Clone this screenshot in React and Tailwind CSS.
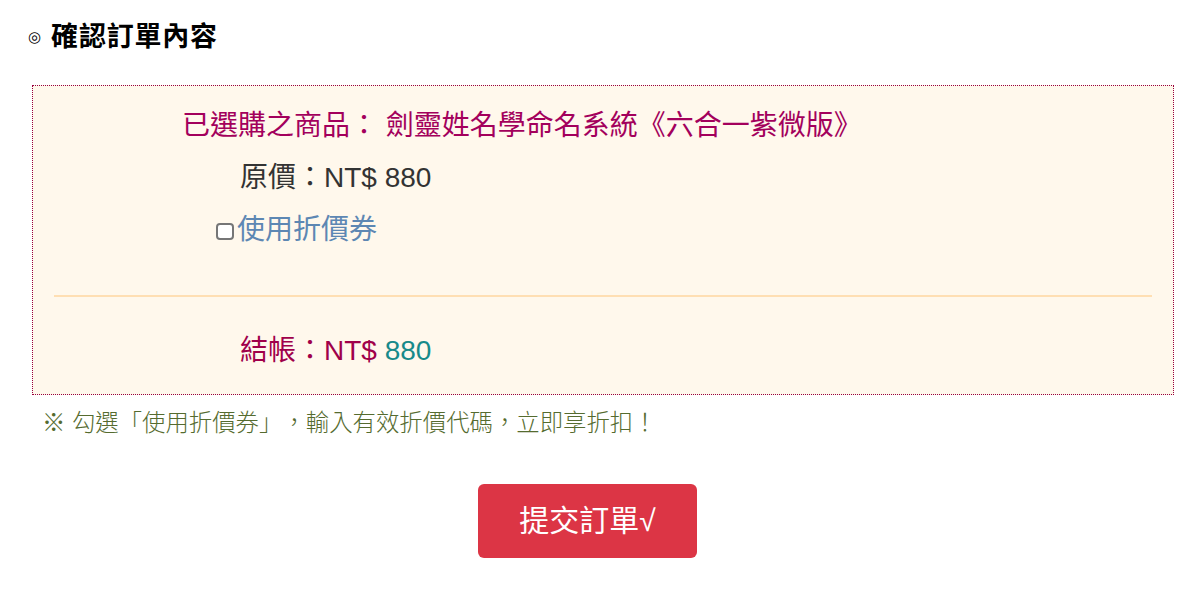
import React from "react";

const font = "font-['Liberation_Sans','Noto_Sans_CJK_TC',sans-serif] [text-spacing-trim:space-all]";

export default function App() {
  return (
    <div lang="zh-Hant-TW" className={`${font} w-[1175px] bg-white`}>
      <h2 className="flex items-center pl-[28px] pt-[17px] h-[40px] box-content text-[27px] leading-[40px] font-bold text-black">
        <span className="text-[15px] font-normal mr-[10px] font-['DejaVu_Sans',sans-serif]">◎</span>
        <span className="tracking-[0.8px]">確認訂單內容</span>
      </h2>

      <div className="ml-[32px] mt-[28px] w-[1142px] border border-dotted border-[#99003d] bg-[#fff8ec] pt-[14px] pb-[17px]">
        <div className="h-[52px] leading-[52px] text-[28px] text-[#a3005c] pl-[149px] whitespace-nowrap">
          已選購之商品： 劍靈姓名學命名系統《六合一紫微版》
        </div>
        <div className="h-[52px] leading-[52px] text-[28px] text-[#333333] pl-[207px]">
          原價：NT$ 880
        </div>
        <label className="flex items-center h-[52px] text-[28px] text-[#5d87b3] pl-[183px]">
          <span className="w-[18px] h-[17px] mr-[3px] mt-[2px] rounded-[4px] border-2 border-[#767676] bg-white" />
          使用折價券
        </label>
        <div className="mt-[39px] mx-[21px] h-[2px] bg-[#ffdfb3]" />
        <div className="mt-[28px] h-[52px] leading-[52px] text-[28px] pl-[207px]">
          <span className="text-[#a0004a]">結帳：NT$ </span>
          <span className="text-[#178a8a]">880</span>
        </div>
      </div>

      <p className="pl-[42px] mt-[12px] text-[23.4px] leading-[32px] font-light text-[#556b2f] whitespace-nowrap">
        ※ 勾選「使用折價券」，輸入有效折價代碼，立即享折扣！
      </p>

      <div className="flex justify-center mt-[45px] pb-[35px]">
        <button className="w-[219px] h-[74px] rounded-[6px] bg-[#dc3545] text-white text-[30px] leading-none">
          提交訂單√
        </button>
      </div>
    </div>
  );
}
